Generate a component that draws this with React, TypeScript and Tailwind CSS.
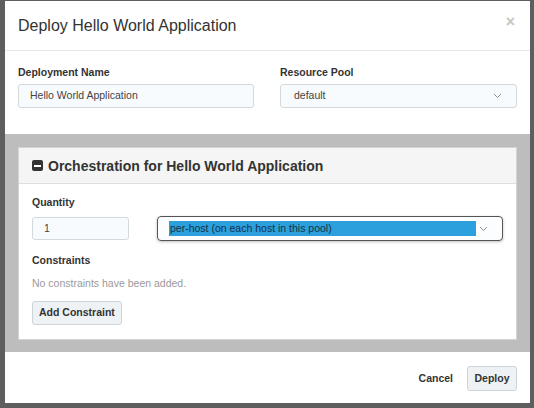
import React from "react";

const Chevron = () => (
  <svg width="9" height="6" viewBox="0 0 9 6" className="shrink-0">
    <polyline points="1,1 4.5,4.5 8,1" fill="none" stroke="#8a8f94" strokeWidth="1" />
  </svg>
);

export default function App() {
  return (
    <div
      className="w-[534px] h-[408px] bg-[#5e5e5e] overflow-hidden pl-[5px] pt-[1px]"
      style={{ fontFamily: '"Liberation Sans", Arial, sans-serif' }}
    >
      <div className="w-[525px] h-[402px] bg-white flex flex-col text-[#333]">
        {/* Header */}
        <div className="h-[50px] shrink-0 flex justify-between pl-[13px] pr-[15px] border-b border-[#e8e8e8]">
          <div className="self-center text-[16px] leading-[20px] text-[#333]">Deploy Hello World Application</div>
          <div className="mt-[12px] text-[16px] leading-[18px] font-bold text-[#c6c6c6]">×</div>
        </div>

        {/* Body top */}
        <div className="px-[13px] pt-[14px] pb-[26px] grid grid-cols-[236px_237px] gap-[26px]">
          <div className="flex flex-col">
            <div className="text-[10.5px] leading-[14px] font-bold mb-[5px]">Deployment Name</div>
            <div className="h-[24px] rounded-[3px] border border-[#d3dade] bg-[#f8fbfd] flex items-center pl-[11px] text-[10.5px] text-[#444]">
              Hello World Application
            </div>
          </div>
          <div className="flex flex-col">
            <div className="text-[10.5px] leading-[14px] font-bold mb-[5px]">Resource Pool</div>
            <div className="h-[24px] rounded-[3px] border border-[#d3dade] bg-[#f8fbfd] flex items-center justify-between pl-[13px] pr-[14px] text-[10.5px] text-[#444]">
              <span>default</span>
              <Chevron />
            </div>
          </div>
        </div>

        {/* Gray section */}
        <div className="bg-[#bdbdbd] px-[13px] pt-[13px] pb-[12px]">
          <div className="bg-white border border-[#d4d4d4]">
            <div className="h-[36px] bg-[#f5f5f5] border-b border-[#dedede] flex items-center pl-[13px] gap-[5px]">
              <div className="w-[11px] h-[11px] rounded-[2px] bg-[#333] flex items-center justify-center">
                <div className="w-[7px] h-[2px] bg-white" />
              </div>
              <div className="text-[14px] leading-[18px] font-bold text-[#333]">Orchestration for Hello World Application</div>
            </div>
            <div className="px-[13px] pt-[11px] pb-[14px] flex flex-col">
              <div className="text-[10.5px] leading-[14px] font-bold mb-[7px]">Quantity</div>
              <div className="flex items-center gap-[28px] h-[25px]">
                <div className="w-[97px] h-[23px] rounded-[3px] border border-[#d3dade] bg-[#f8fbfd] flex items-center pl-[11px] text-[10.5px] text-[#444]">
                  1
                </div>
                <div className="flex-1 h-[25px] rounded-[4px] border-[1.5px] border-[#555] bg-[#fbfdfe] shadow-[0_1px_3px_rgba(0,0,0,0.25)] flex items-center pl-[11px] pr-[14px] justify-between">
                  <div className="w-[307px] h-[15px] bg-[#2ba0dc] flex items-center text-[10.5px] leading-[15px] text-[#14324a] pl-[1px]">
                    per-host (on each host in this pool)
                  </div>
                  <Chevron />
                </div>
              </div>
              <div className="mt-[12px] text-[10.5px] leading-[14px] font-bold">Constraints</div>
              <div className="mt-[9px] text-[10.5px] leading-[14px] text-[#9a9a9a]">No constraints have been added.</div>
              <div className="mt-[9px]">
                <button className="h-[24px] px-[6px] rounded-[3px] border border-[#cdd4da] bg-[#eef2f5] text-[10.5px] font-bold text-[#333]">
                  Add Constraint
                </button>
              </div>
            </div>
          </div>
        </div>

        {/* Footer */}
        <div className="flex-1 flex justify-end items-start pt-[14px] pr-[13px] gap-[8px]">
          <button className="h-[25px] px-[6px] text-[10.5px] font-bold text-[#333]">Cancel</button>
          <button className="h-[25px] w-[50px] rounded-[3px] border border-[#cdd4da] bg-[#eef2f5] text-[10.5px] font-bold text-[#333]">
            Deploy
          </button>
        </div>
      </div>
    </div>
  );
}
